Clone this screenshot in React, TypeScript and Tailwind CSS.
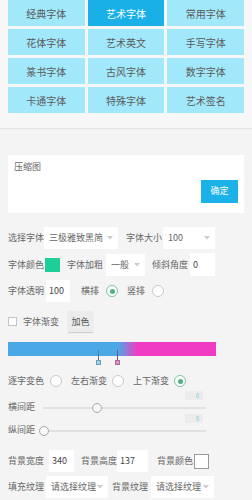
import React from "react";

const tabs = [
  "经典字体",
  "艺术字体",
  "常用字体",
  "花体字体",
  "艺术英文",
  "手写字体",
  "篆书字体",
  "古风字体",
  "数字字体",
  "卡通字体",
  "特殊字体",
  "艺术签名",
];

const Caret = () => (
  <svg width="6" height="4" viewBox="0 0 6 4" className="shrink-0">
    <path d="M0 0 L6 0 L3 3.5 Z" fill="#cccccc" />
  </svg>
);

const Radio = ({ checked }: { checked?: boolean }) => (
  <span
    className={`flex h-[12px] w-[12px] shrink-0 items-center justify-center rounded-full border ${
      checked ? "border-[#7cc5a0]" : "border-[#c8c8c8]"
    } bg-white`}
  >
    {checked && <span className="h-[5px] w-[5px] rounded-full bg-[#4fae80]" />}
  </span>
);

const Select = ({ text, w }: { text: string; w: string }) => (
  <div className={`flex h-[22px] ${w} items-center justify-between overflow-hidden bg-white pl-[5px] pr-[5px]`}>
    <span className="overflow-hidden whitespace-nowrap">{text}</span>
    <Caret />
  </div>
);

const Input = ({ text, w }: { text: string; w: string }) => (
  <div className={`flex h-[22px] ${w} items-center bg-white pl-[3px] text-[#444]`}>{text}</div>
);

const Slider = ({ label, pos }: { label: string; pos: number }) => (
  <div className="relative h-[23px]">
    <div className="absolute right-[41px] top-0 flex h-[9px] w-[18px] items-center justify-end bg-[#ececec] pr-[4px] text-[6px] text-[#7fc6d6]">
      0
    </div>
    <div className="flex h-full items-end pb-[1px]">
      <span className="w-[35px]">{label}</span>
      <div className="relative flex h-[10px] w-[163px] items-center">
        <div className="h-[2px] w-full bg-[#e0e0e0]" />
        <span
          className="absolute h-[10px] w-[10px] rounded-full border border-[#a8a8a8] bg-[#f7f7f7]"
          style={{ left: pos }}
        />
      </div>
    </div>
  </div>
);

export default function App() {
  return (
    <div
      className="w-[252px] h-[500px] overflow-hidden bg-[#f4f4f4] text-[9px] text-[#666]"
      style={{ fontFamily: '"Noto Sans CJK SC", "Noto Sans", sans-serif' }}
    >
      <div className="border-b border-[#e4e4e4] bg-[#f7f7f7] px-[8px] pb-[15px]">
        <div className="grid grid-cols-3 gap-x-[3px] gap-y-[3px]">
          {tabs.map((t, i) => (
            <div
              key={t}
              className={`flex h-[26px] items-center justify-center text-[10px] ${
                i === 1 ? "bg-[#18b0e6] text-white" : "bg-[#a2e8fb] text-[#5a5a5a]"
              }`}
            >
              {t}
            </div>
          ))}
        </div>
      </div>

      <div className="px-[8px]">
        <div className="mt-[26px] h-[58px] bg-white px-[6px] pt-[5px]">
          <div>压缩图</div>
          <div className="mt-[6px] flex justify-end">
            <button className="h-[23px] w-[37px] bg-[#1ab2e8] text-[9px] text-white">确定</button>
          </div>
        </div>

        <div className="mt-[14px] flex h-[22px] items-center">
          <span className="w-[36px]">选择字体</span>
          <Select text="三极雅致黑简" w="w-[74px]" />
          <span className="ml-[8px] w-[37px]">字体大小</span>
          <Select text="100" w="w-[52px]" />
        </div>

        <div className="mt-[4px] flex h-[23px] items-center">
          <span className="w-[37px]">字体颜色</span>
          <span className="h-[14px] w-[15px] bg-[#1ccf98]" />
          <span className="ml-[7px] w-[39px]">字体加粗</span>
          <Select text="一般" w="w-[39px]" />
          <span className="ml-[7px] w-[38px]">倾斜角度</span>
          <div className="flex h-[23px] w-[25px] items-center bg-white pl-[3px] text-[#444]">0</div>
        </div>

        <div className="mt-[4px] flex h-[22px] items-center">
          <span className="w-[38px]">字体透明</span>
          <Input text="100" w="w-[24px]" />
          <span className="ml-[11px] w-[25px]">横排</span>
          <Radio checked />
          <span className="ml-[9px] w-[25px]">竖排</span>
          <Radio />
        </div>

        <div className="mt-[9px] flex h-[21px] items-center">
          <span className="h-[9px] w-[9px] border border-[#c4c4c4] bg-white" />
          <span className="ml-[6px] w-[45px]">字体渐变</span>
          <button className="h-[21px] w-[25px] bg-[#ececec] text-[9px] text-[#555] shadow-[0_1px_1px_rgba(0,0,0,0.15)]">
            加色
          </button>
        </div>

        <div className="relative mt-[10px] h-[24px]">
          <div className="h-[14px] w-[208px] bg-[linear-gradient(to_right,#4aa8e6_0%,#4aa8e6_53%,#f03cc2_62%,#f03cc2_100%)]" />
          <span className="absolute left-[90px] top-[8px] h-[10px] w-px bg-[#4a7fa8]" />
          <span className="absolute left-[88px] top-[18px] h-[5px] w-[5px] border border-[#6b9cb8] bg-[#9fd0ec]" />
          <span className="absolute left-[109px] top-[8px] h-[10px] w-px bg-[#8a4a7a]" />
          <span className="absolute left-[107px] top-[18px] h-[5px] w-[5px] border border-[#b06a9a] bg-[#e88ad0]" />
        </div>

        <div className="mt-[8px] flex h-[14px] items-center">
          <span className="w-[42px]">逐字变色</span>
          <Radio />
          <span className="ml-[9px] w-[41px]">左右渐变</span>
          <Radio />
          <span className="ml-[9px] w-[41px]">上下渐变</span>
          <Radio checked />
        </div>

        <div className="mt-[3px]">
          <Slider label="横间距" pos={49} />
          <Slider label="纵间距" pos={-4} />
        </div>

        <div className="mt-[14px] flex h-[20px] items-center">
          <span className="w-[41px]">背景宽度</span>
          <Input text="340" w="w-[25px]" />
          <span className="ml-[7px] w-[36px]">背景高度</span>
          <Input text="137" w="w-[31px]" />
          <span className="ml-[9px] w-[37px]">背景颜色</span>
          <span className="h-[15px] w-[15px] border border-[#9a9a9a] bg-white" />
        </div>

        <div className="mt-[5px] flex h-[22px] items-center">
          <span className="w-[38px]">填充纹理</span>
          <Select text="请选择纹理" w="w-[62px]" />
          <span className="ml-[4px] w-[39px]">背景纹理</span>
          <Select text="请选择纹理" w="w-[63px]" />
        </div>
      </div>
    </div>
  );
}
